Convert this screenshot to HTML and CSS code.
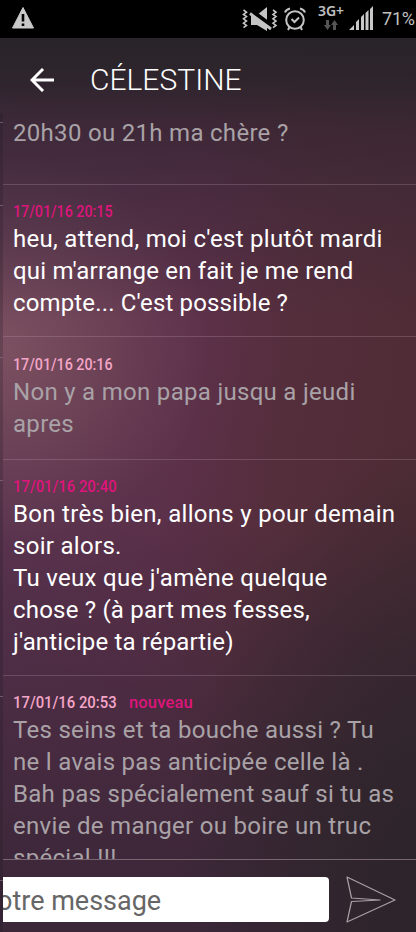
FILE: index.html
```html
<!DOCTYPE html>
<html lang="fr">
<head>
<meta charset="utf-8">
<title>Célestine</title>
<link rel="stylesheet" href="styles.css">
</head>
<body>
<div class="phone">
  <div class="statusbar">
    <svg class="warn" width="24" height="24" viewBox="0 0 24 24"><path fill="#c9c9c9" stroke="#c9c9c9" stroke-linejoin="round" d="M12 1.5 22.5 22H1.500z"/><path stroke="#000" stroke-width="2.6" d="M12 8v7.500M12 17.500v2.500"/></svg>
    <svg class="mute" width="36" height="26" viewBox="0 0 36 26"><path fill="#c4c4c4" d="M9 8h6l10-8v24l-10-6H9z"/><path stroke="#000" stroke-width="4.600" d="M9 3.500l22 16.500"/><path stroke="#c4c4c4" stroke-width="2.800" d="M8 6.500l21 15.500"/><path fill="none" stroke="#c4c4c4" stroke-width="1.600" d="M1.500 3l3 2.200-3 2.200 3 2.200-3 2.200 3 2.200-3 2.200 3 2.200-3 2.200M31 3l3 2.200-3 2.200 3 2.200-3 2.200 3 2.200-3 2.200 3 2.200-3 2.200"/></svg>
    <svg class="alarm" width="22" height="24" viewBox="0 0 22 24"><g fill="none" stroke="#c4c4c4" stroke-width="2"><circle cx="11" cy="13" r="8.800"/><path d="M7.500 12l3 3 4.500-4.500M1 5.500Q2 2.500 6 1.500M21 5.500Q20 2.500 16 1.500M5.500 20l-1.500 3M16.500 20l1.500 3"/></g></svg>
    <div class="network"><span>3G+</span><svg width="14" height="11" viewBox="0 0 14 11"><path fill="#555" d="M2 0h3v5h2l-3.500 5L0 5h2zM9 10V5H7l3.500-5L14 5h-2v5z"/></svg></div>
    <svg class="signal" width="24" height="24" viewBox="0 0 24 24"><path fill="#c8c8c8" d="M0 24l5-5v5zM7 24v-8l3-3v11zM12 24V11l3-3v16zM16.500 24V7l3-3v20zM21 24V3l3-3v24z"/></svg>
    <span class="battery">71%</span>
  </div>
  <div class="app">
    <header class="header">
      <svg width="24" height="24" viewBox="0 0 24 24"><path fill="none" stroke="#fff" stroke-width="3" d="M13 1 2 12l11 11M2 12h22"/></svg>
      <h1>CÉLESTINE</h1>
    </header>
    <main class="thread">
      <article class="msg received first"><p>20h30 ou 21h ma chère ?</p></article>
      <article class="msg sent"><div class="meta"><time>17/01/16 20:15</time></div><p>heu, attend, moi c'est plutôt mardi<br><span class="snug">qui m'arrange en fait je me rend</span><br><span class="tight">compte... C'est possible ?</span></p></article>
      <article class="msg received short"><div class="meta"><time>17/01/16 20:16</time></div><p>Non y a mon papa jusqu a jeudi<br>apres</p></article>
      <article class="msg sent"><div class="meta"><time class="wide">17/01/16 20:40</time></div><p>Bon très bien, allons y pour demain<br>soir alors.<br>Tu veux que j'amène quelque<br><span class="snug">chose ? (à part mes fesses,</span><br><span class="tight">j'anticipe ta répartie)</span></p></article>
      <article class="msg received"><div class="meta"><time class="wide">17/01/16 20:53</time><span class="new">nouveau</span></div><p>Tes seins et ta bouche aussi ? Tu<br>ne l avais pas anticipée celle là .<br>Bah pas spécialement sauf si tu as<br>envie de manger ou boire un truc<br>spécial !!!</p></article>
    </main>
    <footer class="composer">
      <div class="field"><span>otre message</span></div>
      <svg width="50" height="48" viewBox="0 0 50 48"><path fill="none" stroke="#a99fa7" stroke-width="1.200" stroke-linejoin="round" d="M1 1l48 23L1 46l4.500-20.500L34 24 5.500 22z"/></svg>
    </footer>
    <svg class="edge" width="3" height="819" viewBox="0 0 3 819"><path fill="#1c1820" fill-opacity=".22" d="M0 0h3v819H0z"/><path stroke="#84717c" stroke-opacity=".7" d="M0 9.500h3M0 92.500h3M0 244.500h3M0 367.500h3M0 583.500h3M0 767.500h3"/></svg>
  </div>
</div>
</body>
</html>
```
FILE: styles.css
```css
* { box-sizing: border-box; }
body { margin: 0; background: #000; font-family: Roboto, "Liberation Sans", sans-serif; }
.phone { width: 416px; height: 932px; overflow: hidden; display: flex; flex-direction: column; }
.statusbar { height: 38px; flex: none; background: #000; display: flex; align-items: flex-start; color: #c0c0c0; }
.warn { margin: 6px 0 0 11px; }
.mute { margin: 7px 0 0 207px; }
.alarm { margin: 7px 0 0 6px; }
.network { width: 28px; margin: 2px 0 0 11px; display: flex; flex-direction: column; align-items: center; font: 600 14px/17px "Noto Sans", sans-serif; }
.network svg { margin-top: 1px; }
.signal { margin: 6px 0 0 4px; }
.battery { margin: 8px 0 0 9px; font-size: 18px; line-height: 22px; letter-spacing: -.2px; }

.app {
  position: relative;
  flex: 1; min-height: 0; display: flex; flex-direction: column;
  background:
    linear-gradient(rgba(40, 36, 41, 1) 0, rgba(44, 36, 43, .92) 45px, rgba(48, 36, 46, .68) 85px, rgba(52, 38, 52, .5) 140px, rgba(52, 38, 52, 0) 280px),
    radial-gradient(ellipse 280px 260px at 0 310px, rgba(128, 84, 98, .9), rgba(120, 76, 92, .5) 45%, rgba(104, 60, 82, .15) 75%, rgba(100, 50, 80, 0)),
    radial-gradient(ellipse 260px 460px at 436px 860px, rgba(43, 36, 41, 1), rgba(43, 36, 41, .6) 50%, rgba(43, 36, 41, 0)),
    linear-gradient(rgba(58, 38, 55, 0) 480px, rgba(60, 39, 57, 1) 850px),
    linear-gradient(97deg, #573350 0, #5a2f49 42%, #552e3c 62%, #4c2b33 100%);
}
.edge { position: absolute; left: 0; top: 75px; }
.header { height: 75px; flex: none; padding: 8px 0 0 30px; display: flex; align-items: center; gap: 36px; color: #fff; }
.header h1 { margin: 0; font-size: 30px; font-weight: 300; line-height: 40px; letter-spacing: 0; }

.thread { flex: 1; min-height: 0; overflow: hidden; margin-left: 3px; border-bottom: 1px solid #79676f; }
.msg { padding: 0 0 17px 10px; border-top: 1px solid rgba(190, 160, 180, .27); }
.first { padding: 4px 0 35px 10px; border-top: 0; }
.short { padding: 1px 0 19px 10px; }
.meta { height: 38px; padding-top: 17px; display: flex; line-height: 20px; }
time { width: 116px; font-size: 16.500px; font-weight: 500; white-space: nowrap; transform: scaleX(.865); transform-origin: 0 50%; }
time.wide { transform: scaleX(.9); }
.new { color: #df147b; font-size: 16.500px; font-weight: 500; letter-spacing: .15px; }
.msg p { margin: 0; font-size: 24px; line-height: 32px; white-space: nowrap; letter-spacing: .3px; }
.snug { letter-spacing: .2px; }
.tight { letter-spacing: .14px; }
.sent p { color: #fff; }
.sent time { color: #df147b; }
.received p { color: #a9a2a7; }
.received time { color: #f5a6c8; }

.composer { height: 72px; flex: none; padding: 7px 20px 0 3px; display: flex; align-items: center; justify-content: space-between; }
.field { width: 326px; height: 45px; background: #fff; border-radius: 0 4px 4px 0; color: #666; font-size: 27px; line-height: 48px; overflow: hidden; white-space: nowrap; }
.field span { margin-left: -6px; }
```
